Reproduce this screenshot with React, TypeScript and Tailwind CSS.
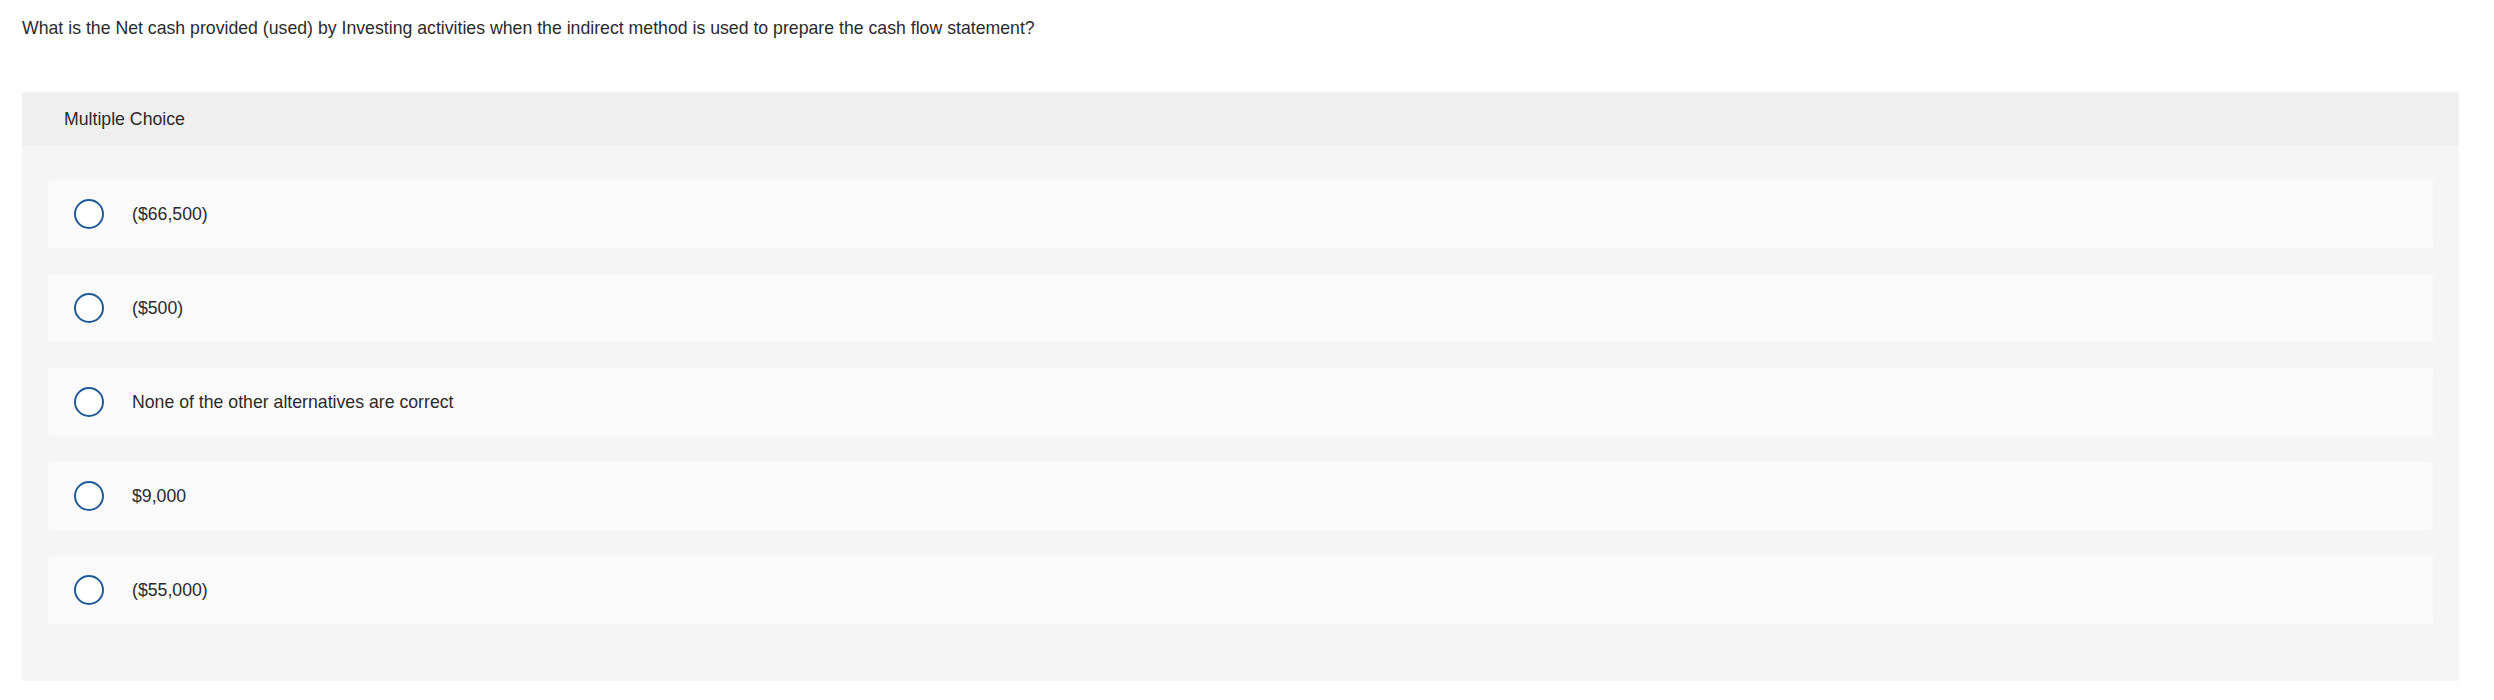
const options = [
  "($66,500)",
  "($500)",
  "None of the other alternatives are correct",
  "$9,000",
  "($55,000)",
];

export default function App() {
  return (
    <div className="min-h-[700px] bg-white font-['Liberation_Sans',Arial,sans-serif] text-[17.7px] text-[#2b2b2b]">
      <p className="pl-[22px] pt-[16px] leading-[24px]">
        What is the Net cash provided (used) by Investing activities when the indirect method is used to prepare the cash flow statement?
      </p>

      <div className="ml-[22px] mr-[35px] mt-[52px] overflow-hidden rounded-[3px] bg-[#f5f5f5]">
        <div className="flex h-[54px] items-center bg-[#efefef] pl-[42px]">
          <span className="leading-[24px]">Multiple Choice</span>
        </div>

        <div className="flex flex-col gap-[26px] px-[26px] pb-[57px] pt-[34px]">
          {options.map((label) => (
            <label
              key={label}
              className="flex h-[68px] cursor-pointer items-center rounded-[3px] bg-[#fafafa] pl-[26px]"
            >
              <span className="h-[30px] w-[30px] shrink-0 rounded-full border-[2.5px] border-[#1f5b98] bg-white" />
              <span className="ml-[28px] leading-[24px]">{label}</span>
            </label>
          ))}
        </div>
      </div>
    </div>
  );
}
